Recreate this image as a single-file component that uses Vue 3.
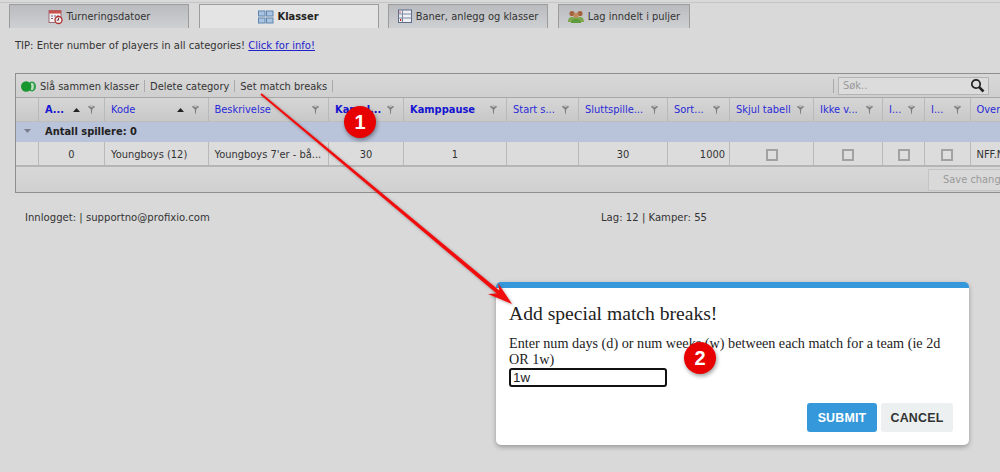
<template>
  <div class="page">
    <div class="tabs">
      <div v-for="tab in tabs" :key="tab.label" class="tab" :class="{ 'tab--active': tab.active }" :style="{ width: tab.width + 'px' }">
        <svg v-if="tab.icon === 'cal'" width="16" height="16" viewBox="0 0 16 16">
          <rect x="1" y="1.500" width="12" height="12" fill="#f4f0f0" stroke="#9a6a78" />
          <rect x="1" y="1.500" width="12" height="3" fill="#c8504a" />
          <path d="M3 7h2M6 7h2M9 7h2M3 9.500h2" stroke="#7a5a80" />
          <circle cx="10.500" cy="11" r="3.500" fill="#eee" stroke="#b03030" stroke-width="1.300" />
          <path d="M10.500 9v2.200h-1.800" stroke="#703040" fill="none" />
        </svg>
        <svg v-else-if="tab.icon === 'grid'" width="16" height="14" viewBox="0 0 16 14">
          <rect x="0.500" y="1" width="6.500" height="5" fill="#a9c3e0" stroke="#5f86b0" />
          <rect x="8.500" y="1" width="6.500" height="5" fill="#a9c3e0" stroke="#5f86b0" />
          <rect x="0.500" y="8" width="6.500" height="5" fill="#a9c3e0" stroke="#5f86b0" />
          <rect x="8.500" y="8" width="6.500" height="5" fill="#a9c3e0" stroke="#5f86b0" />
        </svg>
        <svg v-else-if="tab.icon === 'list'" width="15" height="15" viewBox="0 0 15 15">
          <rect x="0.500" y="1" width="13" height="12.500" fill="#f0f0f2" stroke="#5c6c8c" />
          <path d="M0.500 5h13M0.500 9h13M4.500 1v12.500" stroke="#7a88a4" fill="none" />
          <path d="M2 2.500v1.500M2 10.500h1v1h-1" stroke="#c02828" fill="none" />
        </svg>
        <svg v-else width="18" height="16" viewBox="0 0 18 16">
          <circle cx="5" cy="4.500" r="2.600" fill="#a4623c" />
          <circle cx="13" cy="4.500" r="2.600" fill="#a4623c" />
          <circle cx="9" cy="6.500" r="2.800" fill="#c08a5c" />
          <path d="M1 13c0-4 2-5 4-5s3 1 4 1 2-1 4-1 4 1 4 5z" fill="#7fa64e" />
          <path d="M4 14c0-3 2-4 5-4s5 1 5 4z" fill="#5d9a3c" />
        </svg>
        <span>{{ tab.label }}</span>
      </div>
    </div>

    <p class="tip">TIP: Enter number of players in all categories! <a class="tip__link">Click for info!</a></p>

    <div class="grid">
      <div class="toolbar">
        <svg class="toolbar__icon" width="15" height="11" viewBox="0 0 15 11">
          <ellipse cx="11" cy="5.500" rx="4" ry="5" fill="#2f9e46" />
          <ellipse cx="11" cy="5.500" rx="1.800" ry="3.400" fill="#bfe0c4" />
          <circle cx="5.200" cy="5.500" r="5.200" fill="#17962f" />
        </svg>
        <span class="toolbar__item">Slå sammen klasser</span>
        <span class="toolbar__sep"></span>
        <span class="toolbar__item">Delete category</span>
        <span class="toolbar__sep"></span>
        <span class="toolbar__item">Set match breaks</span>
        <span class="toolbar__sep"></span>
        <span class="toolbar__spacer"></span>
        <span class="toolbar__sep toolbar__sep--search"></span>
        <div class="search">
          <span>Søk..</span>
          <svg width="15" height="15" viewBox="0 0 15 15">
            <circle cx="6" cy="6" r="4.200" fill="none" stroke="#222" stroke-width="1.700" />
            <path d="M9.200 9.200l4.300 4.300" stroke="#222" stroke-width="2.600" />
          </svg>
        </div>
      </div>

      <div class="row row--head">
        <div v-for="col in columns" :key="col.key" class="cell" :class="{ 'cell--bold': col.bold }">
          <span class="cell__label">{{ col.label }}</span>
          <svg v-if="col.sort" class="sort" width="7" height="4" viewBox="0 0 7 4"><path d="M3.500 0L7 4H0z" fill="#222" /></svg>
          <svg v-if="col.key !== 'gap'" class="funnel" width="7" height="9" viewBox="0 0 7 9">
            <path d="M0 1.500C0 .5 7 .5 7 1.500 7 2.500 4.500 3.500 4.200 4.500L3.800 9H3.200L2.800 4.500C2.500 3.500 0 2.500 0 1.500z" fill="#7e7e7e" />
            <ellipse cx="3.500" cy="1.600" rx="2.200" ry="0.600" fill="#c4c4c4" />
          </svg>
        </div>
      </div>

      <div class="group">
        <svg width="7" height="4" viewBox="0 0 7 4"><path d="M0 0h7L3.500 4z" fill="#7a7f8e" /></svg>
        <b>Antall spillere: 0</b>
      </div>

      <div class="row row--data">
        <div v-for="col in columns" :key="col.key" class="cell" :class="'cell--' + (col.align || 'left')">
          <span v-if="col.check" class="check"></span>
          <template v-else>{{ col.value }}</template>
        </div>
      </div>

      <div class="grid__foot">
        <div class="save">Save changes</div>
      </div>
    </div>

    <div class="status">
      <span class="status__user">Innlogget: | supportno@profixio.com</span>
      <span>Lag: 12 | Kamper: 55</span>
    </div>

    <div class="modal">
      <h2 class="modal__title">Add special match breaks!</h2>
      <label class="modal__label">Enter num days (d) or num weeks (w) between each match for a team (ie 2d OR 1w)</label>
      <div class="modal__input">1w</div>
      <div class="modal__actions">
        <button class="btn btn--submit">SUBMIT</button>
        <button class="btn btn--cancel">CANCEL</button>
      </div>
    </div>

    <svg class="arrow" width="1000" height="472" viewBox="0 0 1000 472">
      <defs>
        <filter id="sh" x="-10%" y="-10%" width="120%" height="120%">
          <feDropShadow dx="1" dy="1" stdDeviation="1.500" flood-color="#000" flood-opacity="0.350" />
        </filter>
      </defs>
      <path d="M261.600 93.200L499.300 290.500 498 283 512 304 488 294 496.700 293.500 260.400 94.800z" fill="#f00f0f" filter="url(#sh)" />
    </svg>

    <div class="badge badge--one">1</div>
    <div class="badge badge--two">2</div>
  </div>
</template>

<script setup>
const tabs = [
  { label: 'Turneringsdatoer', icon: 'cal', width: 180 },
  { label: 'Klasser', icon: 'grid', width: 180, active: true },
  { label: 'Baner, anlegg og klasser', icon: 'list', width: 160 },
  { label: 'Lag inndelt i puljer', icon: 'people', width: 132 }
]

const columns = [
  { key: 'gap', label: '', value: '' },
  { key: 'a', label: 'A...', bold: true, sort: true, value: '0', align: 'center' },
  { key: 'kode', label: 'Kode', sort: true, value: 'Youngboys (12)' },
  { key: 'besk', label: 'Beskrivelse', value: "Youngboys 7'er - bå..." },
  { key: 'kamp', label: 'Kampl...', bold: true, value: '30', align: 'center' },
  { key: 'pause', label: 'Kamppause', bold: true, value: '1', align: 'center' },
  { key: 'start', label: 'Start s...', value: '' },
  { key: 'slutt', label: 'Sluttspille...', value: '30', align: 'center' },
  { key: 'sort', label: 'Sort...', value: '1000', align: 'right' },
  { key: 'skjul', label: 'Skjul tabell', check: true, align: 'center' },
  { key: 'ikke', label: 'Ikke v...', check: true, align: 'center' },
  { key: 'i1', label: 'I...', check: true, align: 'center' },
  { key: 'i2', label: 'I...', check: true, align: 'center' },
  { key: 'over', label: 'Overføring', value: 'NFF.N' }
]
</script>

<style>
html, body {
  margin: 0;
  background: #d9d9d9;
  overflow: hidden;
}
</style>

<style scoped>
.page {
  position: relative;
  width: 1000px;
  height: 472px;
  overflow: hidden;
  background: #d9d9d9;
  font-family: "DejaVu Sans", sans-serif;
  font-size: 9.900px;
  color: #333;
}

.tabs {
  display: flex;
  gap: 9.500px;
  height: 24px;
  padding: 1px 0 0 9px;
  border-top: 1px solid #c4c4c4;
  margin-top: 2px;
}

.tab {
  display: flex;
  align-items: center;
  justify-content: center;
  gap: 3px;
  box-sizing: border-box;
  height: 24px;
  border: 1px solid #9c9c9c;
  border-bottom: 0;
  background: linear-gradient(#b9bbbf, #cfd0d2);
  color: #333;
}

.tab--active {
  background: #e4e4e4;
  font-weight: bold;
  color: #222;
}

.tip {
  margin: 0;
  padding: 11px 0 0 15px;
  font-size: 10px;
  line-height: 13px;
  color: #333;
}

.tip__link {
  color: #2222cc;
  text-decoration: underline;
}

.grid {
  margin: 21px 0 0 15px;
  width: 1010px;
  border: 1px solid #8f8f8f;
  background: #d4d4d4;
}

.toolbar {
  display: flex;
  align-items: center;
  box-sizing: border-box;
  height: 24px;
  padding: 1px 0 0 5px;
  border-bottom: 1px solid #a8a8a8;
  background: linear-gradient(#d8d8d8, #cfcfcf);
}

.toolbar__icon {
  margin-right: 4px;
}

.toolbar__sep {
  width: 1px;
  height: 12px;
  margin: 0 5px;
  background: #aaa;
}

.toolbar__spacer {
  flex: 1;
}

.toolbar__sep--search {
  height: 14px;
  margin: 0 4px 0 0;
}

.search {
  display: flex;
  align-items: center;
  justify-content: space-between;
  box-sizing: border-box;
  width: 151px;
  height: 18px;
  margin: -1px 37px 0 0;
  padding: 0 3px 0 4px;
  border: 1px solid #b4b4b4;
  background: #dcdcdc;
  color: #999;
}

.row {
  display: grid;
  grid-template-columns: 23px 66px 103.500px 120.500px 75px 103px 72px 89px 62px 84px 69px 42px 45.500px 1fr;
}

.row--head {
  box-sizing: border-box;
  height: 24px;
  border-bottom: 1px solid #bdbdbd;
  background: linear-gradient(#d6d6d6, #c8c8c8);
}

.row--data {
  height: 23px;
  background: #dcdcdc;
  border-bottom: 2px solid #b5b5b5;
}

.row--data .cell {
  padding-top: 2px;
}

.cell {
  display: flex;
  align-items: center;
  box-sizing: border-box;
  padding: 0 6px;
  border-right: 1px solid #b9b9b9;
  min-width: 0;
  white-space: nowrap;
  overflow: hidden;
}

.row--head .cell {
  color: #2a2ad8;
}

.cell--bold {
  font-weight: bold;
}

.row--head .cell--bold {
  color: #1414d0;
}

.cell__label {
  margin-right: auto;
}

.sort {
  margin-right: 8px;
  flex: none;
}

.funnel {
  margin-right: 3px;
  flex: none;
}

.cell--center {
  justify-content: center;
}

.cell--right {
  justify-content: flex-end;
  padding-right: 4px;
}

.group {
  display: flex;
  align-items: center;
  gap: 14px;
  box-sizing: border-box;
  height: 20px;
  padding: 0 0 2px 8px;
  background: #b9c3d9;
  color: #222;
}

.check {
  display: block;
  box-sizing: border-box;
  width: 12px;
  height: 12px;
  border: 2px solid #a2a2a2;
  background: #dedede;
}

.grid__foot {
  display: flex;
  justify-content: flex-end;
  height: 25px;
  background: linear-gradient(#d8d8d8, #d0d0d0);
}

.save {
  box-sizing: border-box;
  width: 98px;
  height: 22px;
  margin: 2px 0 0;
  padding: 4px 0 0 14px;
  border: 1px solid #c4c4c4;
  background: #d9d9d9;
  color: #9a9a9a;
  white-space: nowrap;
  overflow: hidden;
}

.status {
  display: flex;
  padding: 18px 0 0 25px;
  font-size: 10.100px;
  line-height: 13px;
}

.status__user {
  width: 576px;
}

.arrow {
  position: absolute;
  top: 0;
  left: 0;
  pointer-events: none;
}

.modal {
  position: absolute;
  left: 496px;
  top: 282px;
  width: 473px;
  height: 163px;
  box-sizing: border-box;
  padding: 6px 13px 0;
  border-top: 6px solid #3498db;
  border-radius: 5px;
  background: #fff;
  box-shadow: 0 2px 5px rgba(0, 0, 0, 0.3);
  font-family: "Liberation Serif", serif;
  color: #222;
}

.modal__title {
  margin: 8px 0 9px;
  font-size: 19.600px;
  line-height: 24px;
  font-weight: normal;
  color: #222;
}

.modal__label {
  display: block;
  font-size: 14.200px;
  line-height: 16px;
}

.modal__input {
  box-sizing: border-box;
  width: 158px;
  height: 19px;
  margin-top: 1px;
  padding-left: 2px;
  border: 2px solid #111;
  border-radius: 3px;
  font-family: "Liberation Sans", sans-serif;
  font-size: 13.300px;
  line-height: 15px;
}

.modal__actions {
  display: flex;
  justify-content: flex-end;
  gap: 4px;
  margin: 16px 3px 0 0;
}

.btn {
  height: 29px;
  padding: 0;
  border: 0;
  border-radius: 3px;
  font-family: "Liberation Sans", sans-serif;
  font-size: 12.400px;
  font-weight: bold;
  letter-spacing: 0.200px;
}

.btn--submit {
  width: 70px;
  background: #3498db;
  color: #fff;
}

.btn--cancel {
  width: 72px;
  background: #ecf0f1;
  color: #333;
}

.badge {
  position: absolute;
  display: flex;
  align-items: center;
  justify-content: center;
  width: 32px;
  height: 32px;
  border-radius: 50%;
  background: #e80000;
  box-shadow: 1px 2px 4px rgba(0, 0, 0, 0.4);
  font-family: "Liberation Sans", sans-serif;
  font-size: 20px;
  font-weight: bold;
  color: #fff;
}

.badge--one {
  left: 344px;
  top: 106px;
}

.badge--two {
  left: 684px;
  top: 342px;
}
</style>
